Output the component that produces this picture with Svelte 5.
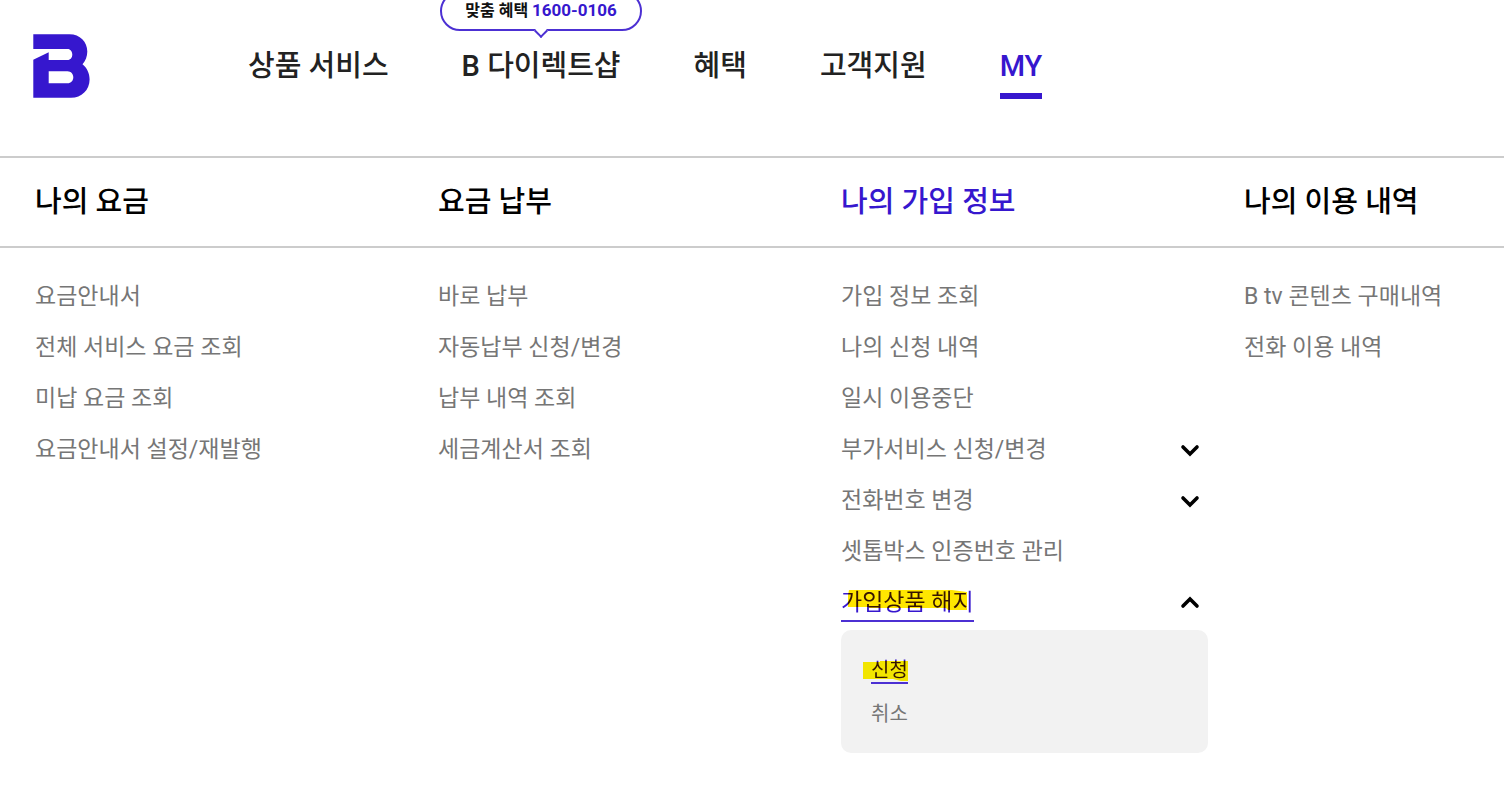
<script lang="ts">
	type Item = { label: string; children?: string[]; open?: boolean };
	type Column = { title: string; active?: boolean; items: Item[] };

	const menus = ['상품 서비스', 'B 다이렉트샵', '혜택', '고객지원', 'MY'];
	let current = $state('MY');

	let columns = $state<Column[]>([
		{
			title: '나의 요금',
			items: [
				{ label: '요금안내서' },
				{ label: '전체 서비스 요금 조회' },
				{ label: '미납 요금 조회' },
				{ label: '요금안내서 설정/재발행' }
			]
		},
		{
			title: '요금 납부',
			items: [
				{ label: '바로 납부' },
				{ label: '자동납부 신청/변경' },
				{ label: '납부 내역 조회' },
				{ label: '세금계산서 조회' }
			]
		},
		{
			title: '나의 가입 정보',
			active: true,
			items: [
				{ label: '가입 정보 조회' },
				{ label: '나의 신청 내역' },
				{ label: '일시 이용중단' },
				{ label: '부가서비스 신청/변경', children: [] },
				{ label: '전화번호 변경', children: [] },
				{ label: '셋톱박스 인증번호 관리' },
				{ label: '가입상품 해지', children: ['신청', '취소'], open: true }
			]
		},
		{
			title: '나의 이용 내역',
			items: [{ label: 'B tv 콘텐츠 구매내역' }, { label: '전화 이용 내역' }]
		}
	]);
</script>

<header class="top">
	<a class="logo" href="#home" aria-label="B">
		<svg viewBox="0 0 58 64" width="58" height="64" aria-hidden="true">
			<path
				fill="#3617ce"
				fill-rule="evenodd"
				d="M1.3 0.3H37.5C48 0.3 55.3 8 55.3 17.6C55.3 22.5 53.6 27 50.5 30.3C55 34 57.6 39.5 57.6 45.5C57.6 56 49.5 63.8 39 63.8H1.3V25.7L16.7 18.3V26H35.5C38.5 26 40.3 23.5 40.3 20.5C40.3 17.5 38.5 15 35.5 15H1.3ZM16.7 37.2V49.3H35.5C39 49.3 41.3 46.5 41.3 43.2C41.3 40 39 37.2 35.5 37.2Z"
			/>
		</svg>
	</a>
	<nav class="gnb">
		{#each menus as menu (menu)}
			<a
				href="#{menu}"
				class:current={menu === current}
				onclick={() => (current = menu)}
			>
				{menu}
				{#if menu === 'B 다이렉트샵'}
					<span class="bubble">맞춤 혜택 <b>1600-0106</b></span>
				{/if}
			</a>
		{/each}
	</nav>
</header>

<main class="columns">
	{#each columns as column (column.title)}
		<section class="column">
			<h2 class:active={column.active}>{column.title}</h2>
			<ul class="items">
				{#each column.items as item (item.label)}
					<li>
						<div class="row">
							<a href="#{item.label}" class:selected={item.open}>
								{item.label}
								{#if item.open}
									<svg class="marker" viewBox="0 0 120 20" preserveAspectRatio="none" aria-hidden="true">
										<path fill="#ffe600" d="M1 0H104L119 2V20H100L98 18H22L20 17H0V5Z" />
									</svg>
								{/if}
							</a>
							{#if item.children}
								<button
									type="button"
									aria-label={item.label}
									aria-expanded={item.open ?? false}
									onclick={() => (item.open = !item.open)}
								>
									<svg class:up={item.open} viewBox="0 0 20 14" width="20" height="14" aria-hidden="true">
										<path d="M3 4L10 11L17 4" fill="none" stroke="#000" stroke-width="3.6" stroke-linecap="round" />
									</svg>
								</button>
							{/if}
						</div>
						{#if item.open && item.children?.length}
							<ul class="sub">
								{#each item.children as child, i (child)}
									<li>
										<a href="#{child}" class:selected={i === 0}>
											{child}
											{#if i === 0}
												<svg class="marker small" viewBox="0 0 45 20" preserveAspectRatio="none" aria-hidden="true">
													<path fill="#f2e500" d="M0 1H17V0H45V20H38L30 18H0Z" />
												</svg>
											{/if}
										</a>
									</li>
								{/each}
							</ul>
						{/if}
					</li>
				{/each}
			</ul>
		</section>
	{/each}
</main>

<style>
	:global(body) {
		margin: 0;
		background: #ffffff;
		font-family: Roboto, 'Noto Sans CJK KR', sans-serif;
		overflow-x: hidden;
	}

	a {
		color: inherit;
		text-decoration: none;
	}

	ul {
		margin: 0;
		padding: 0;
		list-style: none;
	}

	.top {
		display: flex;
		align-items: flex-start;
		height: 156px;
		padding: 0 32px;
	}

	.logo {
		margin-top: 34px;
	}

	.logo svg {
		display: block;
	}

	.gnb {
		display: flex;
		gap: 73px;
		margin-left: 158px;
		padding-top: 39px;
	}

	.gnb > a {
		position: relative;
		height: 54px;
		color: #222222;
		font-size: 29px;
		font-weight: 500;
		line-height: 54px;
		white-space: nowrap;
	}

	.gnb > .current {
		border-bottom: 6px solid #3617ce;
		color: #3617ce;
	}

	.bubble {
		position: absolute;
		bottom: 62px;
		left: 50%;
		box-sizing: border-box;
		width: 202px;
		height: 40px;
		border: 2px solid #4c30d3;
		border-radius: 20px;
		background: #ffffff;
		color: #111111;
		font-size: 16px;
		font-weight: 700;
		line-height: 34px;
		text-align: center;
		transform: translateX(-50%);
	}

	.bubble::after {
		position: absolute;
		bottom: -7px;
		left: 50%;
		width: 8px;
		height: 8px;
		border: solid #4c30d3;
		border-width: 0 2px 2px 0;
		background: #ffffff;
		content: '';
		transform: translateX(-50%) rotate(45deg);
	}

	.bubble b {
		color: #3617ce;
		font-size: 17px;
		font-weight: 700;
	}

	.columns {
		display: grid;
		grid-template-columns: repeat(3, 403fr) 295fr;
	}

	.column {
		min-width: 0;
	}

	h2 {
		margin: 0;
		border-top: 2px solid #cccccc;
		border-bottom: 2px solid #cccccc;
		padding-left: 35px;
		color: #000000;
		font-size: 29px;
		font-weight: 500;
		line-height: 88px;
		white-space: nowrap;
	}

	h2.active {
		color: #3617ce;
	}

	.items {
		padding: 23px 1px 0 35px;
		color: #767676;
		font-size: 23px;
		white-space: nowrap;
	}

	.row {
		display: flex;
		align-items: center;
		justify-content: space-between;
		height: 51px;
	}

	.row a,
	.sub a {
		position: relative;
		display: block;
	}

	.row a {
		line-height: 35px;
	}

	.row .selected,
	.sub .selected {
		isolation: isolate;
		box-shadow: 0 2px #4c30d3;
		color: #3617ce;
	}

	/* highlighter pen stroke, inked over the text */
	.marker {
		position: absolute;
		top: 5px;
		left: 7px;
		width: 120px;
		height: 20px;
		mix-blend-mode: multiply;
		pointer-events: none;
	}

	.marker.small {
		top: 3px;
		left: -8px;
		width: 45px;
	}

	button {
		display: flex;
		align-items: center;
		justify-content: center;
		width: 36px;
		height: 36px;
		border: 0;
		padding: 0;
		background: none;
		cursor: pointer;
	}

	.up {
		transform: rotate(180deg);
	}

	.sub {
		display: grid;
		justify-items: start;
		gap: 20px;
		margin-top: 2px;
		border-radius: 10px;
		padding: 28px 30px 27px;
		background: #f2f2f2;
		font-size: 20px;
		line-height: 24px;
	}
</style>
